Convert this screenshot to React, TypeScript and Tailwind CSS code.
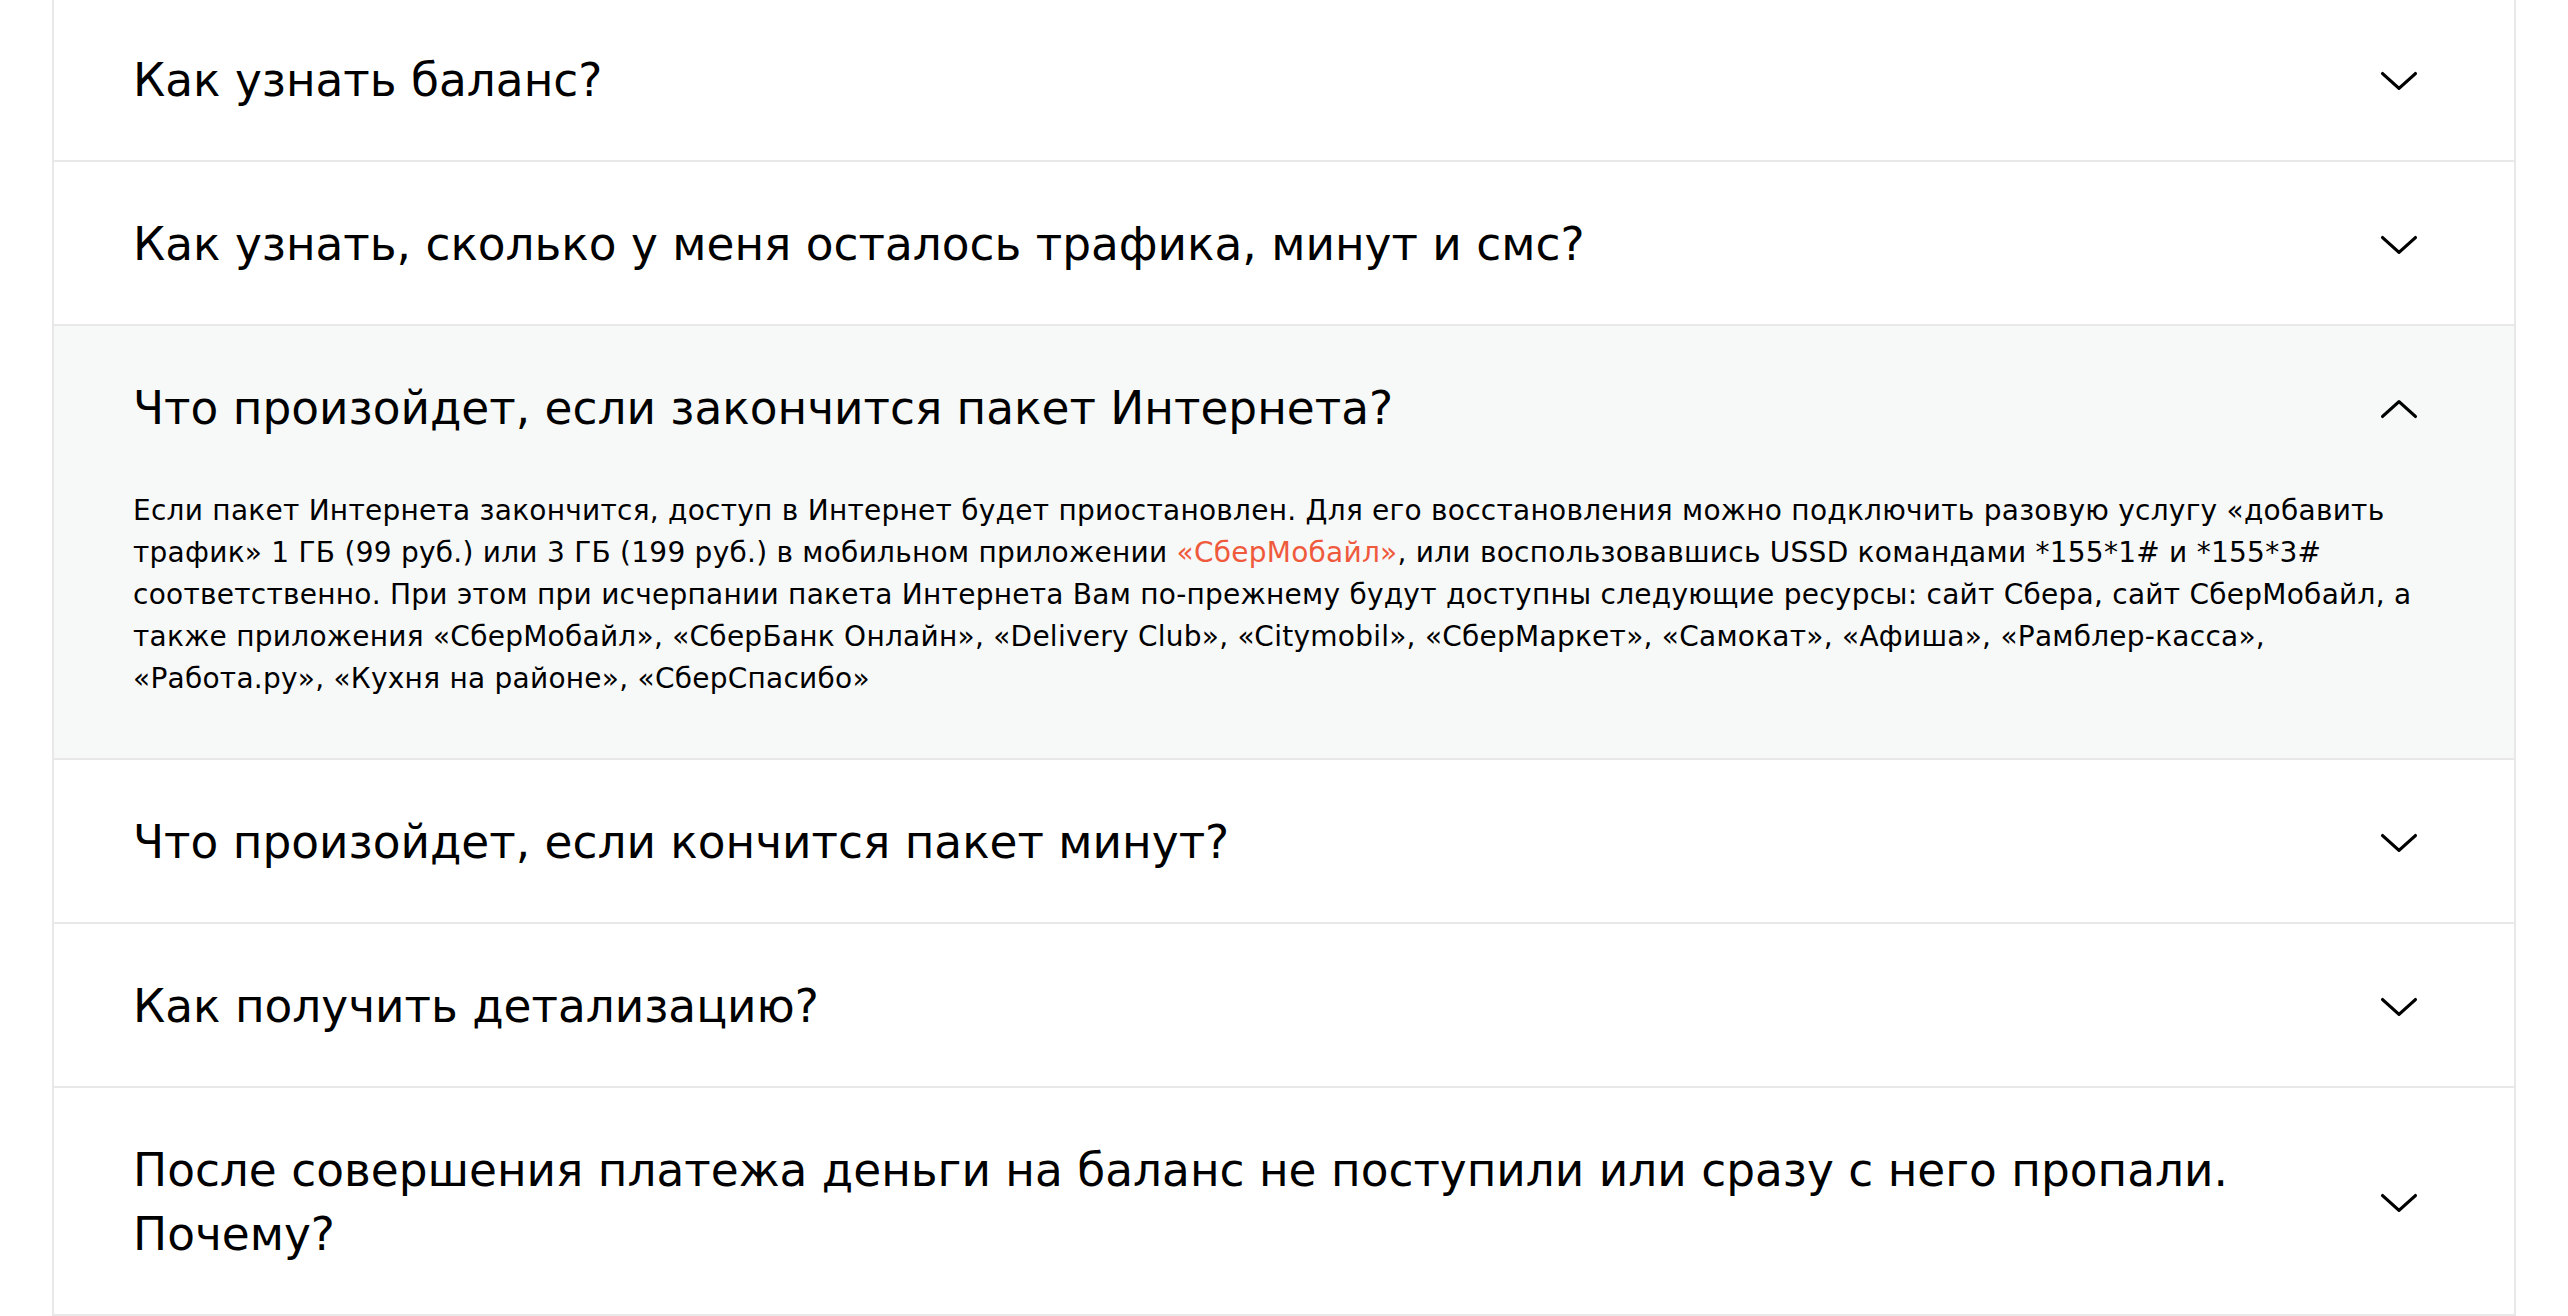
import React from 'react';

// --- Data ---

type FaqItem = {
  question: string;
  answer?: React.ReactNode;
};

const items: FaqItem[] = [
  { question: 'Как узнать баланс?' },
  { question: 'Как узнать, сколько у меня осталось трафика, минут и смс?' },
  {
    question: 'Что произойдет, если закончится пакет Интернета?',
    answer: (
      <>
        Если пакет Интернета закончится, доступ в Интернет будет приостановлен. Для его восстановления можно
        подключить разовую услугу «добавить трафик» 1 ГБ (99 руб.) или 3 ГБ (199 руб.) в мобильном приложении{' '}
        <a href="#" className="text-[#ef5a3d]">«СберМобайл»</a>, или воспользовавшись USSD командами *155*1# и
        *155*3# соответственно. При этом при исчерпании пакета Интернета Вам по-прежнему будут доступны следующие
        ресурсы: сайт Сбера, сайт СберМобайл, а также приложения «СберМобайл», «СберБанк Онлайн», «Delivery Club»,
        «Citymobil», «СберМаркет», «Самокат», «Афиша», «Рамблер-касса», «Работа.ру», «Кухня на районе»,
        «СберСпасибо»
      </>
    ),
  },
  { question: 'Что произойдет, если кончится пакет минут?' },
  { question: 'Как получить детализацию?' },
  { question: 'После совершения платежа деньги на баланс не поступили или сразу с него пропали. Почему?' },
];

// --- Components ---

const Chevron: React.FC<{ up?: boolean }> = ({ up }) => (
  <svg width="40" height="40" viewBox="0 0 40 40" fill="none" className="shrink-0">
    <path
      d={up ? 'M3.6 27.4 L20 12.6 L36.4 27.4' : 'M3.6 12.6 L20 27.4 L36.4 12.6'}
      stroke="#000"
      strokeWidth="3.3"
      strokeLinecap="round"
      strokeLinejoin="round"
    />
  </svg>
);

const FaqRow: React.FC<{ item: FaqItem; first: boolean }> = ({ item, first }) => {
  const open = !!item.answer;
  return (
    <div className={open ? 'bg-[#f7f8f8]' : 'bg-white'}>
      <div className={first ? 'flex items-center gap-8 pl-[79px] pr-[95px] pt-[51px] pb-[47px]' : 'flex items-center gap-8 pl-[79px] pr-[95px] pt-[51px] pb-[47px] border-t-2 border-[#e8e8e8]'}>
        <h3 className="flex-1 text-[45.4px] leading-[64px] font-normal text-black">{item.question}</h3>
        <Chevron up={open} />
      </div>
      {open && (
        <div className="pl-[79px] pr-[80px] pt-[2px] pb-[58px] text-[28px] leading-[42px] tracking-[0.25px] text-black">
          {item.answer}
        </div>
      )}
    </div>
  );
};

export default function App() {
  return (
    <div className="min-h-screen bg-white overflow-hidden font-['DejaVu_Sans',sans-serif]">
      <div className="mx-[52px] -mt-[2px] border-x-2 border-b-2 border-[#e8e8e8]">
        {items.map((item, i) => (
          <FaqRow key={i} item={item} first={i === 0} />
        ))}
      </div>
    </div>
  );
}
